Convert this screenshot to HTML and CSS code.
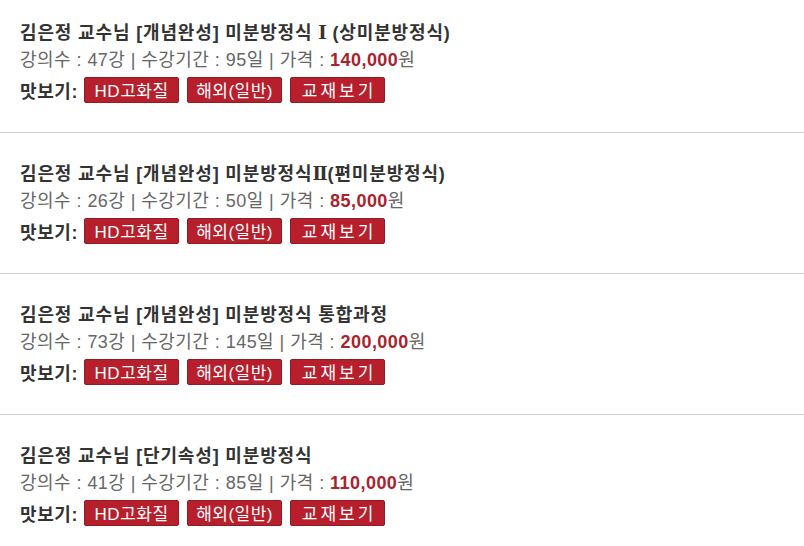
FILE: index.html
```html
<!DOCTYPE html>
<html lang="ko">
<head>
<meta charset="utf-8">
<link rel="stylesheet" href="styles.css">
</head>
<body>
<ul class="list">
  <li class="item">
    <div class="title">김은정 교수님 [개념완성] 미분방정식 <span class="roman">Ⅰ</span> (상미분방정식)</div>
    <div class="info">강의수 : 47강 | 수강기간 : 95일 | 가격 : <b class="price">140,000</b>원</div>
    <div class="preview"><span class="label">맛보기:</span><a class="btn">HD고화질</a><a class="btn">해외(일반)</a><a class="btn wide">교재보기</a></div>
  </li>
  <li class="item">
    <div class="title">김은정 교수님 [개념완성] 미분방정식<span class="roman">Ⅱ</span>(편미분방정식)</div>
    <div class="info">강의수 : 26강 | 수강기간 : 50일 | 가격 : <b class="price">85,000</b>원</div>
    <div class="preview"><span class="label">맛보기:</span><a class="btn">HD고화질</a><a class="btn">해외(일반)</a><a class="btn wide">교재보기</a></div>
  </li>
  <li class="item">
    <div class="title">김은정 교수님 [개념완성] 미분방정식 통합과정</div>
    <div class="info">강의수 : 73강 | 수강기간 : 145일 | 가격 : <b class="price">200,000</b>원</div>
    <div class="preview"><span class="label">맛보기:</span><a class="btn">HD고화질</a><a class="btn">해외(일반)</a><a class="btn wide">교재보기</a></div>
  </li>
  <li class="item">
    <div class="title">김은정 교수님 [단기속성] 미분방정식</div>
    <div class="info">강의수 : 41강 | 수강기간 : 85일 | 가격 : <b class="price">110,000</b>원</div>
    <div class="preview"><span class="label">맛보기:</span><a class="btn">HD고화질</a><a class="btn">해외(일반)</a><a class="btn wide">교재보기</a></div>
  </li>
</ul>
</body>
</html>
```
FILE: styles.css
```css
html, body {
  margin: 0;
  padding: 0;
  background: #fff;
}
body {
  font-family: "Liberation Sans", "Noto Sans CJK KR", sans-serif;
  font-size: 18px;
  color: #333;
}
.list {
  list-style: none;
  margin: 0;
  padding: 0;
}
.item {
  padding: 27px 20px 26px;
  border-bottom: 1px solid #d2d2d2;
}
.item:first-child {
  padding-top: 19px;
}
.item:last-child {
  border-bottom: none;
}
.title {
  font-size: 18px;
  font-weight: bold;
  line-height: 28px;
  letter-spacing: 0.85px;
  color: #333;
}
.roman {
  font-family: "DejaVu Serif", "Liberation Serif", serif;
  letter-spacing: 0;
}
.info {
  font-size: 18px;
  line-height: 26px;
  letter-spacing: 0.45px;
  color: #666;
}
.price {
  color: #a8232e;
  font-weight: bold;
}
.preview {
  display: flex;
  align-items: center;
  height: 33px;
  gap: 8px;
}
.label {
  font-size: 18px;
  font-weight: bold;
  letter-spacing: 0.6px;
  color: #333;
  margin-right: -2px;
}
.btn {
  display: flex;
  align-items: center;
  justify-content: center;
  width: 93px;
  height: 24px;
  background: #b81f2c;
  border: 1px solid #8f1d22;
  border-radius: 2px;
  color: #fff;
  font-size: 17px;
  letter-spacing: 0.5px;
  text-decoration: none;
}
.wide {
  letter-spacing: 3px;
  text-indent: 3px;
}
```
